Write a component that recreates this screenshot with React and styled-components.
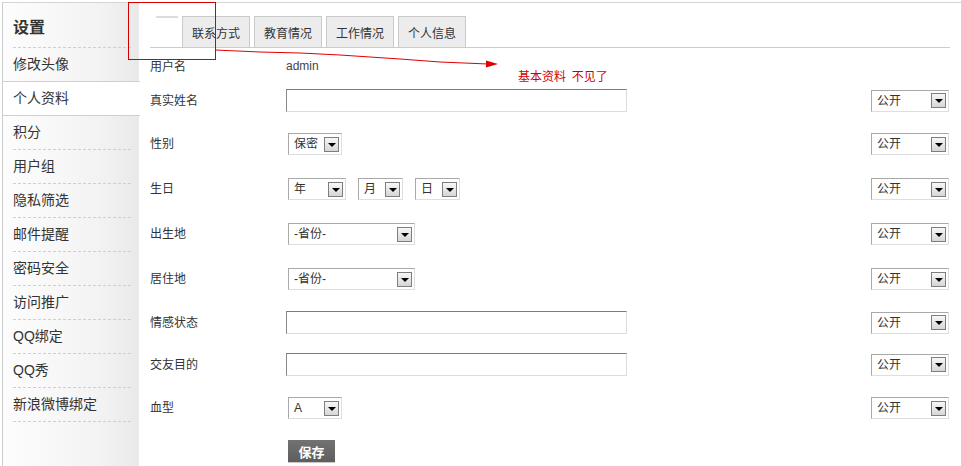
import React from "react";
import styled, { createGlobalStyle } from "styled-components";

const Global = createGlobalStyle`
  html, body { margin: 0; padding: 0; background: #fff; }
  body {
    font-family: "Liberation Sans", "Noto Sans CJK SC", sans-serif;
    font-size: 12px;
    color: #333;
  }
  * { box-sizing: border-box; }
`;

const Frame = styled.div`
  position: relative;
  width: 961px;
  height: 466px;
  overflow: hidden;
`;

const Page = styled.div`
  display: flex;
  margin: 2px 0 0 2px;
  height: 464px;
  border-top: 1px solid #d4d4d4;
  border-left: 1px solid #cdcdcd;
`;

const Sidebar = styled.nav`
  width: 136px;
  flex-shrink: 0;
  background: linear-gradient(to right, #fdfdfd 0%, #f3f3f3 70%, #e9e9e9 100%);
  display: flex;
  flex-direction: column;
`;

const SideTitle = styled.div`
  height: 45px;
  margin: 0 8px 0 10px;
  border-bottom: 1px dashed #cfcfcf;
  display: flex;
  align-items: center;
  padding-top: 1px;
  font-size: 16px;
  font-weight: bold;
  color: #333;
  font-family: "Noto Sans CJK SC", sans-serif;
`;

const SideItem = styled.div`
  height: ${(p) => (p.$active ? 35 : 34)}px;
  padding: 0 8px 0 10px;
  margin-top: ${(p) => (p.$active ? -1 : 0)}px;
  background: ${(p) => (p.$active ? "#fff" : "transparent")};
  border-top: ${(p) => (p.$active ? "1px solid #cfcfcf" : "none")};
  border-bottom: ${(p) => (p.$active ? "1px solid #cfcfcf" : "none")};
  margin-right: ${(p) => (p.$active ? -1 : 0)}px;
`;

const SideLabel = styled.div`
  height: 100%;
  display: flex;
  align-items: center;
  border-bottom: ${(p) => (p.$active ? "none" : "1px dashed #cfcfcf")};
  font-size: 14px;
  color: #333;
  line-height: 1.2;
  font-family: "Liberation Sans", "Noto Sans CJK SC", sans-serif;
`;

const Main = styled.main`
  flex: 1;
  padding: 13px 11px 0 11px;
`;

const TabBar = styled.div`
  display: flex;
  align-items: flex-end;
  gap: 4px;
  height: 32px;
  padding-left: 6px;
  border-bottom: 1px solid #cccccc;
`;

const GhostTab = styled.div`
  width: 22px;
  height: 31px;
  border-top: 2px solid #dcdcdc;
`;

const Tab = styled.div`
  height: 31px;
  padding: 0 9px;
  display: flex;
  align-items: center;
  background: #ececec;
  border: 1px solid #cacaca;
  border-bottom: none;
  font-size: 12px;
  color: #333;
  font-family: "Liberation Sans", "Noto Sans CJK SC", sans-serif;
`;

const Form = styled.div`
  display: flex;
  flex-direction: column;
`;

const Row = styled.div`
  display: grid;
  grid-template-columns: 136px 1fr 79px;
  align-items: center;
  height: 22px;
  margin-top: ${(p) => p.$mt}px;
`;

const Label = styled.div`
  font-size: 12px;
  color: #333;
  line-height: 1;
`;

const Value = styled.div`
  font-size: 12px;
  color: #444;
  margin-top: -2px;
`;

const TextField = styled.input`
  width: 341px;
  height: 23px;
  border-top: 1px solid #7c7c7c;
  border-left: 1px solid #8a8a8a;
  border-right: 1px solid #dcdcdc;
  border-bottom: 1px solid #dcdcdc;
  background: #fff;
  padding: 0 4px;
  outline: none;
  margin: 0;
`;

const Select = styled.div`
  width: ${(p) => p.$w}px;
  height: 22px;
  margin-left: ${(p) => (p.$flush ? 0 : 2)}px;
  display: flex;
  align-items: center;
  justify-content: space-between;
  background: #fff;
  border-top: 1px solid #a9a9a9;
  border-left: 1px solid #a9a9a9;
  border-right: 1px solid #dedede;
  border-bottom: 1px solid #dedede;
  padding: 0 2px 0 5px;
  font-size: 12px;
  color: #333;
  flex-shrink: 0;
`;

const SelectText = styled.span`
  white-space: nowrap;
  line-height: 1;
`;

const SelectArrow = styled.span`
  width: 15px;
  height: 15px;
  border: 1px solid #7e7e7e;
  background: linear-gradient(#f7f7f7, #d6d6d6);
  display: flex;
  align-items: center;
  justify-content: center;
  flex-shrink: 0;
  &::after {
    content: "";
    width: 0;
    height: 0;
    border-left: 4px solid transparent;
    border-right: 4px solid transparent;
    border-top: 4px solid #000;
    margin-top: 1px;
  }
`;

const DateGroup = styled.div`
  display: flex;
  gap: 12px;
  margin-left: 2px;
`;

const SaveButton = styled.button`
  width: 47px;
  height: 23px;
  margin: 0 0 0 2px;
  padding: 0;
  background: linear-gradient(#727272, #5e5e5e);
  border: none;
  border-bottom: 1px solid #c8c8c8;
  color: #fff;
  font-weight: bold;
  font-size: 13px;
  font-family: "Noto Sans CJK SC", sans-serif;
  line-height: 1;
  cursor: pointer;
`;

const Overlay = styled.svg`
  position: absolute;
  left: 0;
  top: 0;
  width: 961px;
  height: 466px;
  pointer-events: none;
`;

const AnnoNote = styled.div`
  position: absolute;
  left: 518px;
  top: 68px;
  font-size: 12px;
  color: #d10000;
  line-height: 16px;
  white-space: nowrap;
  font-family: "Noto Sans CJK SC", sans-serif;
  word-spacing: 3px;
`;

function Dropdown({ w, text, flush }) {
  return (
    <Select $w={w} $flush={flush}>
      <SelectText>{text}</SelectText>
      <SelectArrow />
    </Select>
  );
}

const Privacy = () => <Dropdown w={78} text="公开" flush />;

const sideItems = [
  "修改头像",
  "个人资料",
  "积分",
  "用户组",
  "隐私筛选",
  "邮件提醒",
  "密码安全",
  "访问推广",
  "QQ绑定",
  "QQ秀",
  "新浪微博绑定",
];

export default function App() {
  return (
    <Frame>
      <Global />
      <Page>
        <Sidebar>
          <SideTitle>设置</SideTitle>
          {sideItems.map((t) => {
            const active = t === "个人资料";
            return (
              <SideItem key={t} $active={active}>
                <SideLabel $active={active}>{t}</SideLabel>
              </SideItem>
            );
          })}
        </Sidebar>
        <Main>
          <TabBar>
            <GhostTab />
            <Tab>联系方式</Tab>
            <Tab>教育情况</Tab>
            <Tab>工作情况</Tab>
            <Tab>个人信息</Tab>
          </TabBar>
          <Form>
            <Row $mt={8}>
              <Label>用户名</Label>
              <Value>admin</Value>
              <span />
            </Row>
            <Row $mt={11}>
              <Label>真实姓名</Label>
              <div>
                <TextField type="text" />
              </div>
              <Privacy />
            </Row>
            <Row $mt={22}>
              <Label>性别</Label>
              <div>
                <Dropdown w={54} text="保密" />
              </div>
              <Privacy />
            </Row>
            <Row $mt={23}>
              <Label>生日</Label>
              <DateGroup>
                <Dropdown w={58} text="年" flush />
                <Dropdown w={45} text="月" flush />
                <Dropdown w={45} text="日" flush />
              </DateGroup>
              <Privacy />
            </Row>
            <Row $mt={23}>
              <Label>出生地</Label>
              <div>
                <Dropdown w={127} text="-省份-" />
              </div>
              <Privacy />
            </Row>
            <Row $mt={23}>
              <Label>居住地</Label>
              <div>
                <Dropdown w={127} text="-省份-" />
              </div>
              <Privacy />
            </Row>
            <Row $mt={21}>
              <Label>情感状态</Label>
              <div>
                <TextField type="text" />
              </div>
              <Privacy />
            </Row>
            <Row $mt={20}>
              <Label>交友目的</Label>
              <div>
                <TextField type="text" />
              </div>
              <Privacy />
            </Row>
            <Row $mt={22}>
              <Label>血型</Label>
              <div>
                <Dropdown w={54} text="A" />
              </div>
              <Privacy />
            </Row>
            <Row $mt={21}>
              <span />
              <div>
                <SaveButton type="button">保存</SaveButton>
              </div>
              <span />
            </Row>
          </Form>
        </Main>
      </Page>

      <Overlay viewBox="0 0 961 466">
        <rect x="128.5" y="2.5" width="87" height="57" fill="none" stroke="#d40000" strokeWidth="1" />
        <polyline
          points="215,50 260,52 300,53 340,55 400,59 440,62 488,64"
          fill="none"
          stroke="#e00000"
          strokeWidth="1"
        />
        <polygon points="486,60.5 498,64 486,67.5" fill="#e00000" />
      </Overlay>
      <AnnoNote>基本资料 不见了</AnnoNote>
    </Frame>
  );
}
